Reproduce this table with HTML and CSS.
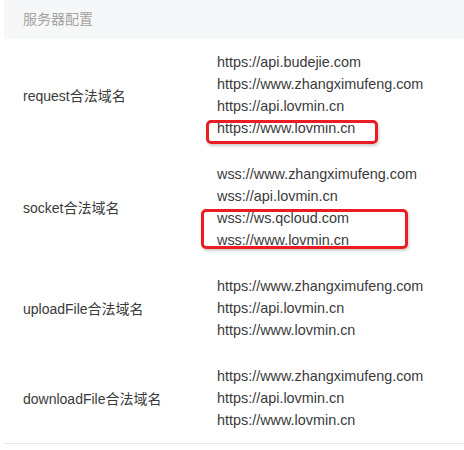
FILE: index.html
```html
<!DOCTYPE html>
<html lang="zh">
<head>
<meta charset="utf-8">
<link rel="stylesheet" href="styles.css">
</head>
<body>
<div class="panel">
  <div class="panel-head">服务器配置</div>
  <div class="row">
    <div class="label">request合法域名</div>
    <div class="urls">
      <div class="url">https://api.budejie.com</div>
      <div class="url">https://www.zhangximufeng.com</div>
      <div class="url">https://api.lovmin.cn</div>
      <div class="hl">
        <div class="url">https://www.lovmin.cn</div>
        <div class="mark mark-1"></div>
      </div>
    </div>
  </div>
  <div class="row">
    <div class="label">socket合法域名</div>
    <div class="urls">
      <div class="url">wss://www.zhangximufeng.com</div>
      <div class="url">wss://api.lovmin.cn</div>
      <div class="hl">
        <div class="url">wss://ws.qcloud.com</div>
        <div class="url">wss://www.lovmin.cn</div>
        <div class="mark mark-2"></div>
      </div>
    </div>
  </div>
  <div class="row">
    <div class="label">uploadFile合法域名</div>
    <div class="urls">
      <div class="url">https://www.zhangximufeng.com</div>
      <div class="url">https://api.lovmin.cn</div>
      <div class="url">https://www.lovmin.cn</div>
    </div>
  </div>
  <div class="row">
    <div class="label">downloadFile合法域名</div>
    <div class="urls">
      <div class="url">https://www.zhangximufeng.com</div>
      <div class="url">https://api.lovmin.cn</div>
      <div class="url">https://www.lovmin.cn</div>
    </div>
  </div>
</div>
</body>
</html>
```

FILE: styles.css
```css
html, body {
  margin: 0;
  padding: 0;
  background: #ffffff;
}
body {
  font-family: "Liberation Sans", Arial, "Noto Sans CJK SC", sans-serif;
  color: #3a3a3a;
}
.panel {
  margin-left: 4px;
  border-bottom: 1px solid #e7e7e7;
}
.panel-head {
  height: 39px;
  line-height: 39px;
  background: #f6f7f9;
  color: #a3a3a3;
  font-size: 14px;
  padding-left: 19px;
}
.row {
  display: flex;
  align-items: center;
  padding: 12px 0;
}
.label {
  width: 194px;
  padding-left: 19px;
  font-size: 14px;
  color: #3a3a3a;
}
.urls {
  display: flex;
  flex-direction: column;
}
.url {
  font-size: 14.4px;
  line-height: 22px;
  height: 22px;
  white-space: nowrap;
  color: #3a3a3a;
}
.hl {
  position: relative;
}
.mark {
  position: absolute;
  border: 3px solid #ec1c24;
  border-radius: 5px;
  box-sizing: border-box;
  box-shadow: 1px 2px 3px rgba(0, 0, 0, 0.2);
}
.mark-1 {
  left: -11px;
  top: 3px;
  width: 172px;
  height: 24px;
}
.mark-2 {
  left: -16px;
  top: 2px;
  width: 207px;
  height: 40px;
}
```
